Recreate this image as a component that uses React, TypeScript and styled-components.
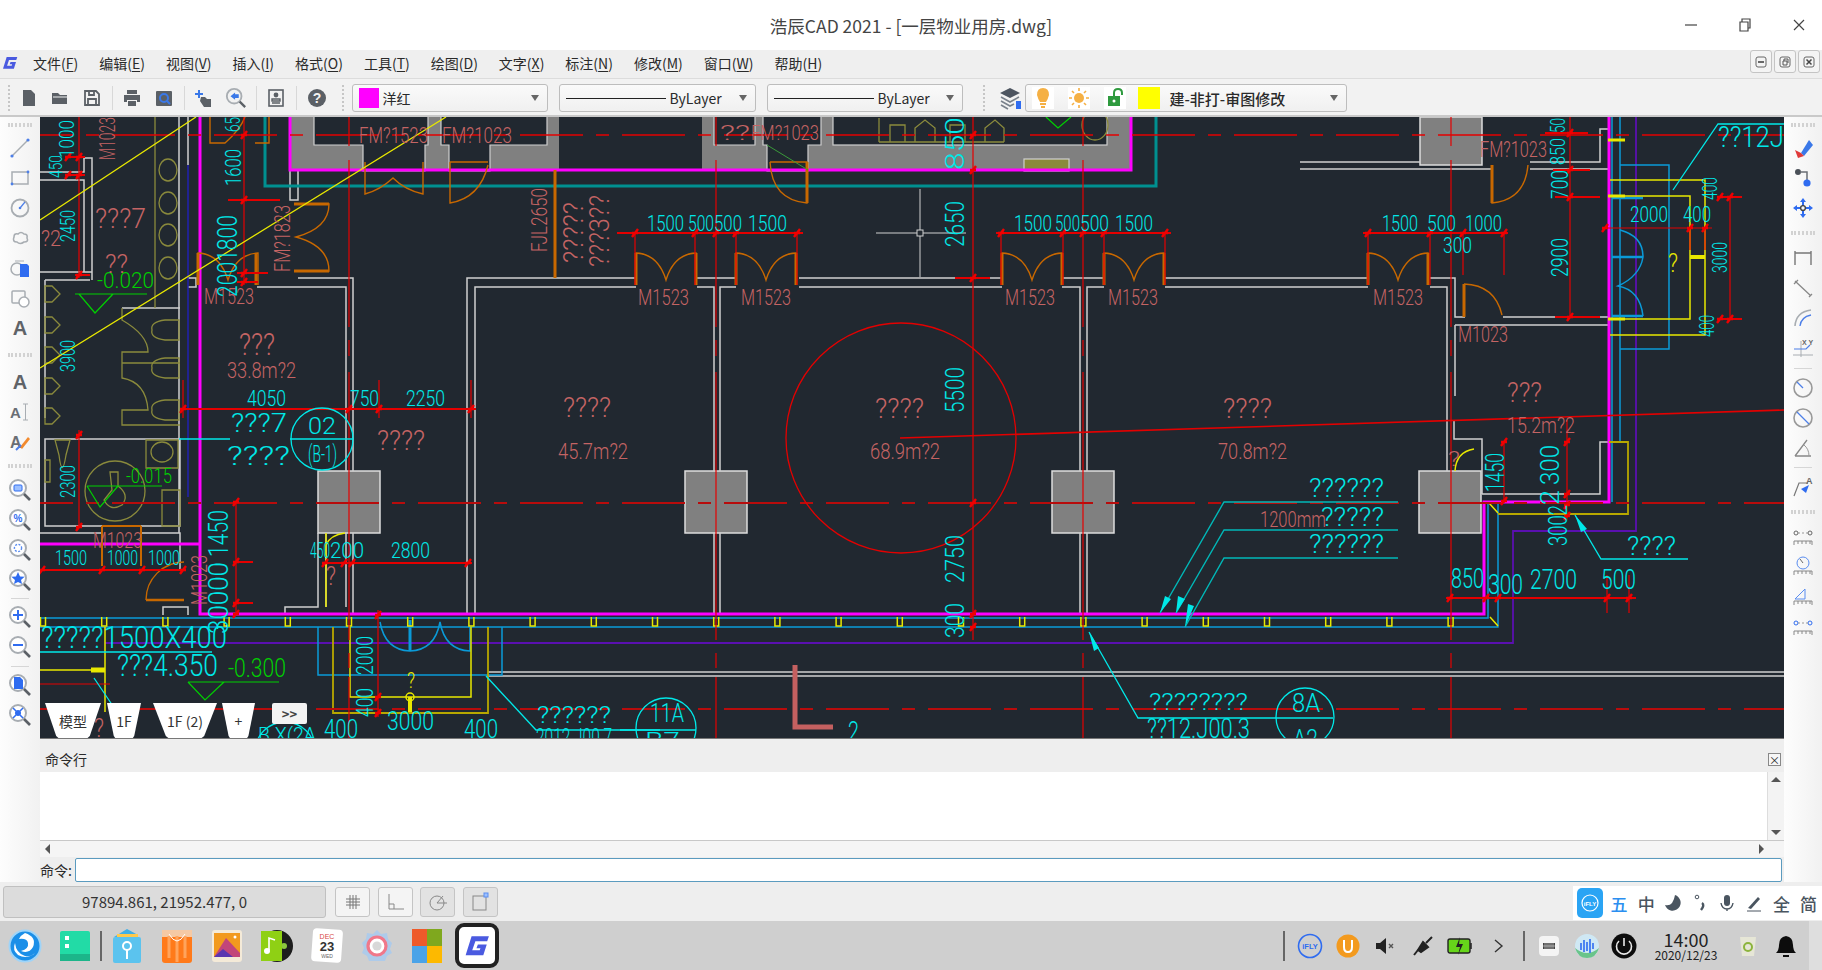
import React from "react";
import styled, { createGlobalStyle } from "styled-components";

const RED = "#e40000";
const DRED = "#b80c0c";
const CY = "#00e8e8";
const SAL = "#c46464";
const GRN = "#00d000";
const YEL = "#e8e800";
const OLV = "#8a8a3c";
const ORG = "#c86800";
const BLU = "#0a9ad8";
const MAG = "#ff00ff";
const TEAL = "#009090";
const WALL = "#cfcfcf";
const PUR = "#5a10b0";
const BG = "#212830";

const GlobalStyle = createGlobalStyle`
  html, body { margin: 0; padding: 0; overflow: hidden; background: #eee; }
  body { font-family: "Noto Sans CJK SC", "Noto Sans", sans-serif; }
`;

const Window = styled.div`
  width: 1822px;
  height: 970px;
  display: flex;
  flex-direction: column;
  color: #333;
`;

const TitleBar = styled.div`
  height: 50px;
  background: #fff;
  display: grid;
  grid-template-columns: 1fr auto 1fr;
  align-items: center;
  .name { font-size: 17.5px; color: #444; grid-column: 2; }
`;
const WinButtons = styled.div`
  grid-column: 3;
  justify-self: end;
  display: flex;
`;
const WinButton = styled.div`
  width: 54px;
  height: 50px;
  box-sizing: border-box;
  padding-left: 7px;
  display: flex;
  align-items: center;
  justify-content: center;
`;

const MenuBar = styled.div`
  height: 28px;
  box-sizing: border-box;
  background: #efefef;
  display: flex;
  align-items: center;
  position: relative;
  padding: 0 0 2px 2px;
`;
const MenuLogo = styled.div`
  width: 31px;
  height: 24px;
  display: flex;
  align-items: center;
`;
const MenuItem = styled.div`
  font-size: 14px;
  color: #2a2a2a;
  margin-right: 21px;
  white-space: nowrap;
  u { text-underline-offset: 2px; }
`;
const MdiButtons = styled.div`
  margin-left: auto;
  display: flex;
  gap: 2px;
  padding-right: 2px;
  align-self: flex-start;
`;
const MdiButton = styled.div`
  width: 22px;
  height: 23px;
  box-sizing: border-box;
  border: 1px solid #c4c4c4;
  border-radius: 3px;
  background: #f4f4f4;
  display: flex;
  align-items: center;
  justify-content: center;
`;

const ToolBar = styled.div`
  height: 39px;
  box-sizing: border-box;
  background: #f2f2f2;
  border-top: 1px solid #dcdcdc;
  border-bottom: 2px solid #c9c9c9;
  display: flex;
  align-items: center;
  padding: 2px 0 0 6px;
`;
const Grip = styled.div`
  width: 3px;
  height: 26px;
  border-left: 2px dotted #c6c6c6;
  margin: ${(p: { $m: string }) => p.$m};
`;
const ToolButton = styled.div`
  width: 31.5px;
  height: 30px;
  display: flex;
  align-items: center;
  justify-content: center;
`;
const ToolSep = styled.div`
  width: 1px;
  height: 24px;
  background: #d8d8d8;
  margin: 0 4px;
`;
const Combo = styled.div<{ $w: number; $ml: number }>`
  width: ${(p) => p.$w}px;
  margin-left: ${(p) => p.$ml}px;
  height: 28px;
  box-sizing: border-box;
  border: 1px solid #bdbdbd;
  border-radius: 3px;
  background: linear-gradient(#fafafa, #f0f0f0);
  display: flex;
  align-items: center;
  padding: 0 8px 0 6px;
  font-size: 14px;
  color: #2a2a2a;
  position: relative;
`;
const Swatch = styled.div<{ $c: string; $s: number; $mr: number }>`
  width: ${(p) => p.$s}px;
  height: ${(p) => p.$s}px;
  background: ${(p) => p.$c};
  margin-right: ${(p) => p.$mr}px;
  flex: none;
`;
const LayerName = styled.span`
  font-size: 15px;
  font-weight: 500;
`;
const ComboArrow = styled.div`
  margin-left: auto;
  width: 0;
  height: 0;
  border-left: 4px solid transparent;
  border-right: 4px solid transparent;
  border-top: 6px solid #666;
`;
const LineSample = styled.div`
  width: 100px;
  height: 0;
  border-top: 1px solid #222;
  margin-right: 4px;
`;
const LayerIcon = styled.div`
  width: 22px;
  height: 22px;
  flex: none;
  display: flex;
  margin-right: ${(p: { $mr: number }) => p.$mr}px;
  background: #fff;
`;

const Main = styled.div`
  flex: 1;
  display: flex;
  min-height: 0;
`;
const SideBar = styled.div<{ $w: number }>`
  width: ${(p) => p.$w}px;
  flex: none;
  background: linear-gradient(90deg, #fdfdfd, #f1f1f1);
  display: flex;
  flex-direction: column;
  align-items: center;
`;
const SideGrip = styled.div<{ $h: number }>`
  height: ${(p) => p.$h}px;
  width: 24px;
  display: flex;
  align-items: center;
  &::after {
    content: "";
    width: 100%;
    height: 4px;
    border-top: 2px dotted #d2d2d2;
    border-bottom: 2px dotted #d2d2d2;
    box-sizing: border-box;
  }
`;
const SideLine = styled.div<{ $h: number }>`
  height: ${(p) => p.$h}px;
  width: 18px;
  display: flex;
  align-items: center;
  &::after { content: ""; width: 100%; height: 1px; background: #d6d6d6; }
`;
const SideIcon = styled.div`
  height: 30px;
  width: 30px;
  display: flex;
  align-items: center;
  justify-content: center;
`;
const BigLetter = styled.span`
  font-family: "Liberation Sans", sans-serif;
  font-weight: 700;
  font-size: 20px;
  color: #5f6368;
`;
const Center = styled.div`
  flex: 1;
  min-width: 0;
  display: flex;
  flex-direction: column;
`;
const CanvasWrap = styled.div`
  height: 622px;
  background: ${BG};
  position: relative;
  overflow: hidden;
  border-bottom: 1px solid #777;
  box-sizing: border-box;
  svg.plan { display: block; }
  svg.plan text { font-family: Roboto, "Liberation Sans", sans-serif; font-weight: 300; }
`;
const TabStrip = styled.div`
  position: absolute;
  left: 5px;
  bottom: 0;
  display: flex;
  align-items: flex-end;
`;
const Tab = styled.div<{ $w: number; $ml: number }>`
  width: ${(p) => p.$w}px;
  margin-left: ${(p) => p.$ml}px;
  height: 35px;
  background: #fff;
  clip-path: polygon(0 0, 100% 0, 80% 94%, 76% 100%, 24% 100%, 20% 94%);
  display: flex;
  align-items: center;
  justify-content: center;
  font-size: 14px;
  color: #333;
`;
const MoreTabs = styled.div`
  width: 35px;
  height: 21px;
  margin-left: 17px;
  margin-bottom: 14px;
  background: #f3f3f3;
  border-radius: 2px;
  font-size: 13px;
  font-weight: 700;
  color: #444;
  display: flex;
  align-items: center;
  justify-content: center;
`;

const CommandHead = styled.div`
  height: 33px;
  box-sizing: border-box;
  padding: 7px 3px 0 5px;
  background: #eeeeee;
  display: flex;
  align-items: center;
  justify-content: space-between;
  font-size: 14px;
  color: #2a2a2a;
  flex: none;
`;
const CloseBox = styled.div`
  width: 13px;
  height: 13px;
  border: 1px solid #888;
  background: #f6f6f6;
  font-size: 11px;
  line-height: 12px;
  text-align: center;
  box-sizing: border-box;
`;
const CommandHistory = styled.div`
  height: 68px;
  background: #fff;
  display: flex;
  justify-content: flex-end;
  flex: none;
`;
const VScroll = styled.div`
  width: 17px;
  background: #f3f3f3;
  border-left: 1px solid #ddd;
  display: flex;
  flex-direction: column;
  justify-content: space-between;
  align-items: center;
  padding: 5px 0;
  box-sizing: border-box;
`;
const HScroll = styled.div`
  height: 17px;
  box-sizing: border-box;
  border-top: 1px solid #c8c8c8;
  background: #f5f5f5;
  display: flex;
  align-items: center;
  flex: none;
  padding-left: 5px;
  padding-right: 20px;
  justify-content: space-between;
`;
const ArrowSide = styled.div<{ $dir: "l" | "r" }>`
  width: 0;
  height: 0;
  border-top: 5px solid transparent;
  border-bottom: 5px solid transparent;
  ${(p) => (p.$dir === "l" ? "border-right: 5px solid #555;" : "border-left: 5px solid #555;")}
`;
const ArrowVert = styled.div<{ $dir: "u" | "d" }>`
  width: 0;
  height: 0;
  border-left: 5px solid transparent;
  border-right: 5px solid transparent;
  ${(p) => (p.$dir === "u" ? "border-bottom: 5px solid #555;" : "border-top: 5px solid #555;")}
`;
const CommandRow = styled.div`
  height: 25px;
  display: flex;
  align-items: center;
  font-size: 14px;
  color: #2a2a2a;
  flex: none;
  input {
    flex: 1;
    height: 24px;
    box-sizing: border-box;
    margin-left: 3px;
    margin-right: 2px;
    border: 1px solid #5b9bbf;
    border-radius: 2px;
    background: #fff;
    outline: none;
  }
`;

const StatusRow = styled.div`
  height: 39px;
  background: #eeeeee;
  display: flex;
  align-items: center;
  padding-left: 3px;
  flex: none;
`;
const Coords = styled.div`
  width: 323px;
  height: 32px;
  box-sizing: border-box;
  background: #dcdcdc;
  border: 1px solid #c0c0c0;
  border-radius: 3px;
  display: flex;
  align-items: center;
  justify-content: center;
  font-size: 15px;
  color: #333;
  margin-right: 9px;
`;
const StatusButton = styled.div<{ $on?: boolean }>`
  width: 35px;
  height: 30px;
  margin-right: 7.5px;
  box-sizing: border-box;
  border: 1px solid #c4c4c4;
  border-radius: 3px;
  background: ${(p) => (p.$on ? "#e2e2e2" : "#f4f4f4")};
  display: flex;
  align-items: center;
  justify-content: center;
`;
const ImeBar = styled.div`
  margin-left: auto;
  height: 34px;
  width: 249px;
  box-sizing: border-box;
  align-self: flex-start;
  margin-top: 4px;
  background: #fff;
  display: flex;
  align-items: center;
  padding-left: 4px;
  font-size: 17px;
  font-weight: 500;
  color: #4a5560;
  span { width: 27.5px; text-align: center; display: flex; justify-content: center; }
  span.blue { color: #2b8ff0; }
`;
const ImeLogo = styled.div`
  width: 26px;
  height: 30px;
  border-radius: 5px;
  background: #2aa4f4;
  margin-right: 3px;
  display: flex;
  align-items: center;
  justify-content: center;
`;

const Dock = styled.div`
  height: 49px;
  background: #cfcfcf;
  display: flex;
  align-items: center;
  flex: none;
`;
const DockSlot = styled.div<{ $w?: number }>`
  width: ${(p) => p.$w ?? 50}px;
  height: 49px;
  display: flex;
  align-items: center;
  justify-content: center;
  flex: none;
`;
const DockSep = styled.div<{ $ml?: number; $mr?: number }>`
  width: 2px;
  height: 30px;
  background: #666;
  flex: none;
  margin-left: ${(p) => p.$ml ?? 0}px;
  margin-right: ${(p) => p.$mr ?? 0}px;
`;
const ActiveApp = styled.div`
  width: 44px;
  height: 45px;
  box-sizing: border-box;
  border: 4px solid #222;
  border-radius: 9px;
  background: #fff;
  display: flex;
  align-items: center;
  justify-content: center;
`;
const Tray = styled.div`
  margin-left: auto;
  display: flex;
  align-items: center;
`;
const Clock = styled.div`
  width: 86px;
  text-align: center;
  color: #222;
  line-height: 1.05;
  .time { font-size: 18px; }
  .date { font-size: 12px; }
`;
const DockEdge = styled.div`
  width: 13px;
  height: 49px;
  margin-left: 5px;
  background: #dedede;
`;

/* ---------- plan drawing helpers ---------- */

type Label = [string, number, number, number, number, string];
type VLabel = [string, number, number, number, number, string];

const Txt = ({ l }: { l: Label }) => (
  <text x={l[1]} y={l[3]} fontSize={l[4] / 0.71} fill={l[5]} textLength={l[2] - l[1]} lengthAdjust="spacingAndGlyphs">
    {l[0]}
  </text>
);
const VTxt = ({ l }: { l: VLabel }) => (
  <text
    transform={`rotate(-90 ${l[1]} ${l[3]})`}
    x={l[1]}
    y={l[3]}
    fontSize={l[4] / 0.71}
    fill={l[5]}
    textLength={l[3] - l[2]}
    lengthAdjust="spacingAndGlyphs"
  >
    {l[0]}
  </text>
);

const labels: Label[] = [
  ["1500", 647, 684, 231, 16, CY], ["500", 688, 714, 231, 16, CY], ["500", 714, 742, 231, 16, CY], ["1500", 748, 787, 231, 16, CY],
  ["1500", 1014, 1052, 231, 16, CY], ["500", 1055, 1080, 231, 16, CY], ["500", 1080, 1109, 231, 16, CY], ["1500", 1115, 1153, 231, 16, CY],
  ["1500", 1382, 1418, 231, 16, CY], ["500", 1427, 1456, 231, 16, CY], ["1000", 1465, 1502, 231, 16, CY], ["300", 1443, 1472, 253, 16, CY],
  ["2000", 1630, 1668, 222, 16, CY], ["400", 1683, 1711, 222, 16, CY],
  ["4050", 247, 286, 406, 16, CY], ["750", 350, 379, 406, 16, CY], ["2250", 406, 445, 406, 16, CY],
  ["1500", 55, 87, 565, 14, CY], ["1000", 107, 138, 565, 14, CY], ["1000", 148, 180, 565, 14, CY],
  ["450", 310, 330, 558, 16, CY], ["200", 330, 364, 558, 16, CY], ["2800", 391, 430, 558, 16, CY],
  ["3000", 387, 434, 730, 18, CY], ["400", 324, 358, 738, 18, CY], ["400", 464, 498, 738, 18, CY],
  ["?????1500X400", 41, 227, 648, 22, CY], ["???4.350", 117, 218, 676, 22, CY],
  ["???7", 231, 287, 432, 18, CY], ["????", 227, 290, 465, 18, CY],
  ["850", 1451, 1484, 588, 19, CY], ["300", 1488, 1523, 594, 19, CY], ["2700", 1530, 1577, 589, 19, CY], ["500", 1601, 1636, 589, 19, CY],
  ["??????", 1309, 1384, 497, 18, CY], ["?????", 1321, 1384, 526, 18, CY], ["??????", 1309, 1384, 553, 18, CY], ["????", 1627, 1676, 555, 18, CY],
  ["??12J", 1718, 1784, 147, 21, CY],
  ["????????", 1149, 1248, 710, 17, CY], ["??12.J00.3", 1147, 1250, 738, 20, CY], ["??????", 537, 611, 723, 17, CY], ["2012.J00.7", 536, 612, 745, 17, CY],
  ["11A", 650, 684, 722, 18, CY], ["B7", 645, 680, 748, 16, CY], ["8A", 1292, 1320, 712, 18, CY], ["A2", 1293, 1318, 748, 18, CY],
  ["02", 308, 336, 434, 17, CY], ["(B-1)", 308, 337, 462, 17, CY], ["B X(2A", 258, 316, 742, 14, CY], ["2", 848, 859, 741, 20, CY],
  ["-0.020", 97, 154, 288, 16, GRN], ["-0.015", 126, 172, 483, 15, GRN], ["-0.300", 228, 286, 677, 18, GRN],
  ["M1523", 638, 689, 305, 16, SAL], ["M1523", 741, 791, 305, 16, SAL], ["M1523", 1005, 1055, 305, 16, SAL], ["M1523", 1108, 1158, 305, 16, SAL],
  ["M1523", 1373, 1423, 305, 16, SAL], ["M1023", 1458, 1508, 342, 16, SAL], ["M1523", 204, 254, 304, 16, SAL],
  ["FM?1523", 359, 428, 143, 16, SAL], ["FM?1023", 442, 512, 143, 16, SAL], ["FM?1023", 1480, 1547, 157, 16, SAL], ["FM?1023", 751, 819, 140, 15, SAL],
  ["??", 720, 750, 140, 15, SAL], ["???", 239, 275, 355, 22, SAL], ["33.8m?2", 227, 296, 378, 16, SAL],
  ["???7", 95, 146, 228, 20, SAL], ["?2", 41, 61, 246, 16, SAL], ["??", 105, 128, 273, 18, SAL],
  ["????", 563, 611, 417, 20, SAL], ["????", 377, 425, 450, 20, SAL], ["45.7m?2", 558, 628, 459, 16, SAL],
  ["????", 875, 924, 418, 20, SAL], ["????", 1223, 1272, 418, 20, SAL], ["68.9m?2", 870, 940, 459, 16, SAL], ["70.8m?2", 1218, 1287, 459, 16, SAL],
  ["???", 1507, 1542, 402, 20, SAL], ["15.2m?2", 1507, 1575, 433, 16, SAL], ["1200mm", 1260, 1326, 527, 16, SAL],
  ["M1023", 93, 142, 548, 16, SAL], ["?", 94, 104, 737, 18, SAL], ["?", 326, 336, 585, 18, SAL], ["?", 1448, 1460, 466, 14, SAL],
  ["?", 407, 415, 688, 16, YEL], ["?", 1668, 1678, 272, 18, YEL],
];

const vlabels: VLabel[] = [
  ["850", 964, 117, 170, 18, CY], ["2650", 964, 201, 247, 18, CY], ["5500", 964, 367, 413, 18, CY], ["2750", 964, 535, 583, 18, CY], ["300", 964, 603, 638, 18, CY],
  ["1600", 241, 149, 186, 16, CY], ["2001800", 237, 215, 297, 20, CY], ["3900", 75, 340, 372, 15, CY], ["2450", 75, 210, 242, 15, CY],
  ["1000", 74, 120, 158, 15, CY], ["450", 62, 155, 178, 13, CY], ["2300", 75, 465, 498, 15, CY], ["1450", 228, 510, 557, 20, CY], ["30000", 228, 562, 634, 20, CY],
  ["65", 240, 117, 132, 15, CY], ["2000", 373, 636, 675, 17, CY], ["400", 373, 688, 717, 17, CY],
  ["50", 1565, 118, 133, 14, CY], ["850", 1565, 138, 165, 14, CY], ["700", 1568, 170, 199, 17, CY], ["2900", 1568, 238, 277, 17, CY],
  ["400", 1717, 177, 200, 14, CY], ["3000", 1727, 242, 273, 14, CY], ["400", 1714, 315, 337, 14, CY],
  ["1450", 1504, 453, 492, 18, CY], ["300", 1559, 445, 485, 18, CY], ["3002", 1567, 505, 546, 18, CY], ["2", 1559, 490, 505, 18, CY],
  ["M1023", 115, 117, 160, 16, SAL], ["FM?1823", 290, 205, 272, 16, SAL], ["FJL2650", 547, 188, 252, 16, SAL],
  ["?????", 583, 202, 263, 20, SAL], ["???3??", 609, 195, 267, 20, SAL], ["M1023", 207, 555, 605, 16, SAL],
];

const ticks: [number, number][] = [
  [635, 233], [695, 233], [716, 233], [736, 233], [797, 233], [1001, 233], [1063, 233], [1083, 233], [1104, 233], [1165, 233],
  [1368, 233], [1430, 233], [1463, 233], [1504, 233], [183, 409], [349, 409], [379, 409], [471, 409], [42, 570], [102, 570], [142, 570], [183, 570],
  [325, 563], [344, 563], [352, 563], [468, 563], [236, 502], [236, 562], [236, 603], [236, 614], [244, 135], [244, 200], [244, 273], [244, 282],
  [68, 157], [79, 157], [68, 175], [79, 175], [79, 275], [79, 435], [79, 527], [378, 615], [378, 697], [378, 713], [973, 135], [973, 170], [973, 278], [973, 503], [973, 614], [973, 627],
  [1570, 133], [1570, 170], [1570, 197], [1570, 317], [1504, 442], [1504, 501], [1567, 442], [1567, 494], [1567, 505], [1567, 516],
  [1450, 598], [1486, 598], [1498, 598], [1607, 598], [1629, 598], [1730, 197], [1730, 319], [1720, 197], [1720, 319], [1605, 228], [1690, 228], [1705, 228],
];

const studs = Array.from({ length: 24 }, (_, i) => 43 + i * 61.2);

const doubleDoor = (x: number) =>
  `M${x} 285 V253 Q${x + 22} 254 ${x + 30} 280 Q${x + 38} 254 ${x + 60} 253 V285`;

const axisSegs = [[117, 146], [160, 327], [340, 356], [372, 640], [653, 668], [677, 739]];

const Plan = () => (
  <svg className="plan" width="1744" height="622" viewBox="40 117 1744 622">
    {/* concrete */}
    <g fill="#808080">
      <rect x="290" y="117" width="269" height="53" />
      <rect x="702" y="117" width="429" height="53" />
      <rect x="1420" y="117" width="62" height="48" stroke="#ddd" strokeWidth="1.5" />
      {[318, 685, 1052, 1419].map((x) => (
        <rect key={x} x={x} y="471" width="62" height="62" stroke="#ddd" strokeWidth="1.5" />
      ))}
    </g>
    <g fill={BG} stroke={WALL} strokeWidth="1.2">
      <path d="M314 116 V145 H363 V171 H425 V145 H428 V116 Z" />
      <path d="M441 116 V145 H449 V171 H490 V145 H547 V116 Z" />
      <path d="M714 116 V145 H755 V116 Z" />
      <path d="M763 116 V145 H767 V171 H808 V145 H821 V116 Z" />
      <rect x="833" y="116" width="274" height="29" />
      <rect x="1024" y="159" width="45" height="12" fill={OLV} />
    </g>

    {/* walls */}
    <path
      fill="none"
      stroke={WALL}
      strokeWidth="1.5"
      d="M298 278 H353 V471 M353 533 V614 M257 287 H346 V471 M346 533 V607 M290 170 V200 H298 V170 M326 533 V607 M285 615 V607 H318 V533
      M467 614 V287 M467 287 V278 H636 M475 614 V287 H636 M697 278 H736 M697 287 H714 V471 M714 533 V614 M720 471 V287 H736 M720 533 V614
      M799 278 H1002 M799 287 H1002 M1062 278 H1104 M1062 287 H1080 V471 M1080 533 V614 M1087 471 V287 H1104 M1087 533 V614
      M1165 278 H1368 M1165 287 H1368 M1430 278 H1455 V317 H1465 M1430 287 H1447 V471 M1503 317 H1608 M1455 325 H1608 M1455 325 V396
      M1300 162 H1420 M1300 169 H1492 M1530 162 H1600 V129 H1608 M1530 169 H1608
      M1454 420 V439 H1482 V471 M1482 494 H1600 V442 H1609 M1482 494 V471
      M179 117 V533 M188 117 V165 M40 172 H84 V158 M84 158 H92 V272 H40 M40 180 H84 V272 M45 280 H90 M45 280 V418 M92 272 V280 M122 308 H180
      M45 439 H180 V526 H45 Z M40 533 H102 M141 533 H180 V570 M163 615 V607 H188 V615 M188 278 H196 V287 H188"
    />
    <g fill="none" stroke={WALL} strokeWidth="1.5">
      <path d="M488 672 H1784 M488 676 H1784" />
    </g>

    {/* olive sanitary details */}
    <g fill="none" stroke={OLV} strokeWidth="1.3">
      <path d="M155 117 V308 M122 308 V320 Q148 335 148 352 H122 V363 H180 M122 363 V378 Q146 382 148 410 H122 V425 H180" />
      {[170, 203, 235, 268].map((y) => (
        <ellipse key={y} cx="168" cy={y} rx="9" ry="11" />
      ))}
      {[294, 325, 355, 386, 416].map((y) => (
        <path key={y} d={`M45 ${y - 8} H52 L60 ${y} L52 ${y + 8} H45 Z`} />
      ))}
      {[330, 368, 410].map((y) => (
        <path key={y} d={`M179 ${y - 10} H165 Q150 ${y - 8} 152 ${y} Q150 ${y + 8} 165 ${y + 10} H179 Z`} />
      ))}
      <circle cx="115" cy="491" r="30" />
      <path d="M55 440 H70 L66 455 Q62 480 59 455 Z M146 440 H178 V468 H146 Z M162 490 H180 V526 H162 Z M45 460 H50 V482 H45 Z" />
      <ellipse cx="162" cy="452" rx="11" ry="10" />
      <path d="M110 472 H118 V486 Q130 495 122 505 Q110 512 104 500 L112 490 Z" />
      <path d="M879 142 V118 M890 142 V125 H905 V142 M915 142 V128 L925 120 L935 128 V142 M950 142 V125 H965 V142 M985 142 V128 L995 120 L1004 128 V142 M879 142 H1004" />
      <ellipse cx="1095" cy="125" rx="13" ry="15" />
    </g>

    {/* structure */}
    <g fill="none">
      <path d="M290 117 V170 H1131 V117" stroke={MAG} strokeWidth="3" />
      <path d="M265 117 V186 H1156 V117" stroke={TEAL} strokeWidth="3" />
      <path d="M200 117 V614 H1484 V502 H1609 V117" stroke={MAG} strokeWidth="3" />
      <path d="M40 544 H200" stroke={MAG} strokeWidth="3" />
      <path d="M105 643 H1513 V531 H1636 V117" stroke={PUR} strokeWidth="1.8" />
      <path d="M188 165 V497" stroke="#2020b0" strokeWidth="1.5" />
    </g>
    <g fill="none" stroke={BLU} strokeWidth="1.5">
      <path d="M40 618 H1488 V502 M40 627 H1498 V502 M1612 117 V502 M1620 117 V442 M1620 165 H1669 V349 H1620" />
      <path d="M318 627 V675 H502 V627" />
      <path d="M1612 198 H1643 M1612 257 H1643 M1612 316 H1643" strokeWidth="2.5" />
      <path d="M1620 230 Q1643 236 1643 257 Q1640 276 1618 286 Q1640 290 1643 316" />
      <path d="M380 622 Q385 650 410 651 Q435 650 440 622 Q445 650 470 651 V627" />
      <path d="M410 620 V651" strokeWidth="3" />
    </g>
    <g fill="none" stroke={YEL} strokeWidth="1.5">
      {studs.map((x) => (
        <path key={x} d={`M${x - 2.5} 617 V626 H${x + 2.5} V617`} />
      ))}
      <path d="M40 670 H105 M105 627 V712 M350 627 V697 H471 V627 M1610 180 H1705 V335 H1610 M1610 196 H1690 V319 H1610" />
      <path d="M91 670 H105" strokeWidth="5" />
      <path d="M410 697 V713" strokeWidth="4" />
      <circle cx="410" cy="697" r="4" />
      <path d="M326 533 V607 M326 545 Q330 535 345 533 M1455 471 Q1456 452 1474 449" />
      <path d="M1608 140 H1625 M1608 196 H1625 M1608 319 H1625" strokeWidth="3" />
      <path d="M1690 257 H1705" strokeWidth="4" />
      <path d="M1489 503 L1498 513 M1490 617 L1498 626" />
    </g>
    <path d="M333 627 V713 H488 V627 M1498 514 H1628 V442 H1609" fill="none" stroke="#b8a800" strokeWidth="1.8" />

    {/* doors */}
    <g fill="none" stroke={ORG} strokeWidth="1.4">
      {[636, 736, 1002, 1104, 1368].map((x) => (
        <g key={x}>
          <path d={doubleDoor(x)} />
          <path d={`M${x} 253 V285 M${x + 60} 253 V285`} strokeWidth="3" />
        </g>
      ))}
      <path d={doubleDoor(198)} />
      <path d="M198 253 V285 M256 253 V285" strokeWidth="3" />
      <path d="M294 204 H329 Q329 228 296 237 Q329 246 329 271 H294" />
      <path d="M294 204 H329 M294 271 H329" strokeWidth="3" />
      <path d="M365 162 V194 Q380 190 393 178 Q405 190 423 194 V162" />
      <path d="M450 162 V203 Q480 198 488 165 M450 162 H488" />
      <path d="M210 117 V143 H225 Q240 130 245 117 M269 117 V143 H255" />
      <path d="M1492 165 V203 Q1525 200 1528 165" />
      <path d="M1492 165 V203" strokeWidth="3" />
      <path d="M1464 284 V317 M1464 284 Q1495 285 1502 315" />
      <path d="M1464 284 V317" strokeWidth="3" />
      <path d="M770 162 Q772 200 807 203 V162 H770" />
      <path d="M807 162 V203" strokeWidth="3" />
      <path d="M102 526 V566 M141 526 V566 M102 526 H141" strokeWidth="2" />
      <path d="M146 600 A38 38 0 0 1 184 562 M146 600 H184" />
      <path d="M146 600 H184" strokeWidth="2.5" />
    </g>
    <path d="M555 170 V278" stroke={ORG} strokeWidth="3" />
    <path d="M767 145 L808 170" stroke="#3a9a3a" />

    {/* axes */}
    <g stroke={DRED} strokeWidth="2" strokeDasharray="63 13 13 13" strokeDashoffset="30">
      <path d="M40 503 H1784" />
      <path d="M40 709 H1784" />
    </g>
    <path d="M40 135 H1784" stroke={RED} strokeWidth="1.4" strokeDasharray="63 13 13 13" strokeDashoffset="30" />
    <g stroke={RED} strokeWidth="1.2">
      {[349, 716, 1083, 1451].map((x) =>
        axisSegs.map((s) => <path key={`${x}-${s[0]}`} d={`M${x} ${s[0]} V${s[1]}`} />)
      )}
      <path d="M973 117 V640 M79 117 V278 M79 430 V527 M244 117 V285 M236 503 V614 M378 610 V717" />
      <path d="M617 233 H803 M996 233 H1171 M1363 233 H1508 M182 409 H476 M41 570 H184 M322 563 H472 M1446 598 H1636" strokeWidth="1.8" />
      <path d="M635 233 V285 M695 233 V285 M736 233 V285 M797 233 V285 M1001 233 V285 M1063 233 V285 M1104 233 V285 M1165 233 V285 M1368 233 V285 M1430 233 V285" />
      <path d="M1463 233 V275 M1504 233 V275 M183 380 V418 M379 380 V418 M471 380 V418 M1607 575 V613 M1629 575 V613" />
      <path d="M1570 117 V317 M1504 442 V503 M1567 420 V520 M1730 197 V319 M1605 228 H1712 M1690 228 V250 M1705 228 V250" />
      <path d="M228 200 H280 M237 273 H268 M237 282 H258 M236 562 H253 M236 603 H253 M75 275 H90 M66 157 H85 M66 175 H85 M1545 133 H1588 M1553 170 H1590 M1555 197 H1600 M1555 317 H1600 M955 278 H990 M1720 197 H1742 M1720 319 H1742" strokeWidth="1.8" />
      <path d="M40 684 H110 M850 739 H40" />
    </g>
    <path d="M900 438 L1784 410" stroke={RED} strokeWidth="1.6" fill="none" />
    <circle cx="901" cy="438" r="115" fill="none" stroke={RED} strokeWidth="1.3" />
    <g stroke="#f00000" strokeWidth="2.4">
      {ticks.map(([x, y]) => (
        <path key={`${x}-${y}`} d={`M${x - 3} ${y + 4} L${x + 3} ${y - 4} M${x - 3} ${y} H${x + 3}`} />
      ))}
    </g>

    {/* crosshair */}
    <g stroke="#d0d0d0" strokeWidth="1" fill="none">
      <path d="M876 233 H966 M920 236 V277 M920 189 V230" />
      <rect x="917" y="230" width="6" height="6" fill={BG} />
    </g>

    {/* diagonal yellow references */}
    <path d="M40 220 L196 117 M40 368 L446 117" stroke={YEL} strokeWidth="1.3" fill="none" />

    {/* leaders */}
    <g fill="none" stroke={CY} strokeWidth="1.3">
      <path d="M1398 502 H1224 L1160 613 M1398 530 H1224 L1176 613 M1398 558 H1224 L1185 627" strokeWidth="1.4" stroke="#00b8b8" />
      <path d="M1575 515 L1601 559 H1688 M1089 632 L1138 718 H1333 M486 676 L536 730 H660 M1673 190 L1718 124 H1784 M94 678 L119 715 M40 652 H212" />
      <circle cx="1305" cy="717" r="29" />
      <circle cx="666" cy="728" r="30" />
      <circle cx="322" cy="439" r="31" />
      <circle cx="285" cy="752" r="30" />
      <path d="M620 730 H696 M290 439 H353 M179 439 H230" />
    </g>
    <g fill={CY} stroke="none">
      <path d="M1160 613 L1165 596 L1171 599 Z M1176 613 L1178 596 L1185 599 Z M1185 627 L1188 604 L1194 606 Z M1089 632 L1099 648 L1094 651 Z M1575 515 L1587 529 L1581 532 Z" />
    </g>

    {/* green level marks */}
    <g fill="none" stroke={GRN} strokeWidth="1.2">
      <path d="M75 294 H147 M79 294 L95 313 L113 294 M188 682 H279 M188 682 L205 700 L224 682 M87 486 H162 M87 486 L100 507 L118 486 M1046 117 L1058 128 L1071 117" />
    </g>

    {/* section mark */}
    <path d="M795 665 V727 H833" fill="none" stroke="#c46060" strokeWidth="5" />

    {labels.map((l, i) => (
      <Txt key={i} l={l} />
    ))}
    {vlabels.map((l, i) => (
      <VTxt key={i} l={l} />
    ))}
  </svg>
);

/* ---------- toolbar / side icons ---------- */

const DK = "#5b6066";
const GY = "#a8adb2";
const ICN = "#4d7fe8";

const Sv = ({ children, s = 20, v = 20 }: { children: React.ReactNode; s?: number; v?: number }) => (
  <svg width={s} height={s} viewBox={`0 0 ${v} ${v}`} fill="none">
    {children}
  </svg>
);
const Mag = ({ children, c = GY }: { children?: React.ReactNode; c?: string }) => (
  <Sv s={24} v={24}>
    <circle cx="10" cy="10" r="8" stroke={c} strokeWidth="2" fill="#fff" />
    <path d="M16 16 L22 22" stroke="#5b6066" strokeWidth="2.6" />
    {children}
  </Sv>
);

const tb: Record<string, React.ReactNode> = {
  file: <Sv><path d="M4 2 H12 L16 6 V18 H4 Z" fill={DK} /></Sv>,
  open: <Sv><path d="M2 5 H8 L10 7 H17 V16 H2 Z" fill={DK} /><path d="M3 9 H17" stroke="#f2f2f2" /></Sv>,
  save: <Sv><path d="M3 3 H14 L17 6 V17 H3 Z M7 3 V7 H12 V3 M6 11 H14 V17 H6 Z" stroke={DK} strokeWidth="1.8" /></Sv>,
  print: <Sv><path d="M5 2 H15 V6 H5 Z M2 7 H18 V14 H15 V12 H5 V14 H2 Z M6 13 H14 V18 H6 Z" fill={DK} /></Sv>,
  prev: <Sv><rect x="2" y="3" width="16" height="15" rx="1" fill={DK} /><circle cx="10" cy="10" r="4" stroke="#3a78e8" strokeWidth="2" /><path d="M13 13 L16 16" stroke="#3a78e8" strokeWidth="2" /></Sv>,
  pick: <Sv><path d="M5 2 V10 M1 6 H9" stroke="#3a78e8" strokeWidth="2" /><path d="M7 9 H11 L13 11 H17 V19 H10 L6 13 Z" fill={DK} /></Sv>,
  zoomp: <Sv s={22} v={24}><circle cx="10" cy="10" r="8" stroke={GY} strokeWidth="2" /><path d="M16 16 L22 22" stroke={DK} strokeWidth="2.5" /><path d="M6 10 L11 6 V14 Z M11 8 H15 V12 H11" fill="#3a78e8" /></Sv>,
  props: <Sv><rect x="3" y="2" width="14" height="16" stroke={DK} strokeWidth="1.6" /><circle cx="10" cy="7" r="2.4" fill={DK} /><path d="M6 11 H14 V13 H6 Z M6 15 H14" stroke={DK} strokeWidth="1.4" /></Sv>,
};

const Line = () => <Sv s={22} v={22}><path d="M3 19 L19 3" stroke={GY} strokeWidth="1.5" /><circle cx="3" cy="19" r="1.6" fill={ICN} /><circle cx="19" cy="3" r="1.6" fill={ICN} /></Sv>;
const Rect = () => <Sv s={22} v={22}><rect x="3" y="5" width="16" height="12" stroke={GY} strokeWidth="1.5" /><circle cx="3" cy="17" r="1.4" fill={ICN} /><circle cx="19" cy="5" r="1.4" fill={ICN} /></Sv>;
const Circ = () => <Sv s={22} v={22}><circle cx="11" cy="11" r="8.5" stroke={GY} strokeWidth="1.8" /><path d="M11 11 L16 5" stroke={ICN} strokeWidth="1.2" /><circle cx="11" cy="11" r="1.3" fill={ICN} /></Sv>;
const Cloud = () => <Sv s={22} v={22}><path d="M5 10 Q5 6 9 7 Q12 4 15 7 Q19 7 18 11 Q20 15 15 15 Q11 18 8 15 Q3 15 5 10 Z" stroke={GY} strokeWidth="1.6" /></Sv>;
const Hatch = () => <Sv s={22} v={22}><circle cx="8" cy="12" r="6" stroke={GY} strokeWidth="1.5" /><path d="M6 4 H15" stroke={GY} /><path d="M11 7 H18 L20 9 V20 H11 Z" fill="#2f6cf0" /></Sv>;
const Region = () => <Sv s={22} v={22}><rect x="3" y="4" width="13" height="12" rx="1" stroke={GY} strokeWidth="1.5" /><circle cx="15" cy="15" r="5" stroke={GY} strokeWidth="1.5" fill="#fff" /></Sv>;
const AI = () => <Sv s={22} v={22}><text x="1" y="17" fontFamily="Liberation Sans" fontWeight="700" fontSize="15" fill="#6a6e74">A</text><path d="M14 3 H19 M16.5 3 V19 M14 19 H19" stroke={GY} /></Sv>;
const AStar = () => <Sv s={22} v={22}><text x="1" y="17" fontFamily="Liberation Sans" fontWeight="700" fontSize="16" fill="#6a6e74">A</text><path d="M11 16 L19 6 L21 8 L13 18 Z" fill="#f28a2e" /><path d="M7 19 L12 14" stroke={ICN} strokeWidth="2" /></Sv>;

const Eraser = () => <Sv s={22} v={22}><path d="M9 16 L17 3 L21 8 L12 19 Z" fill="#3a78e8" /><path d="M3 13 L9 16 L12 19 L6 21 Z" fill="#e03a3a" /></Sv>;
const Pline = () => <Sv s={22} v={22}><circle cx="6" cy="5" r="3" fill="#4a5058" /><path d="M8 5 H15 V13" stroke="#6a6e74" strokeWidth="1.5" /><circle cx="15" cy="16" r="3.6" fill="#2f6cf0" /></Sv>;
const Move = () => <Sv s={22} v={22}><path d="M11 1 L14 5 H12 V9 H10 V5 H8 Z M11 21 L8 17 H10 V13 H12 V17 H14 Z M1 11 L5 8 V10 H9 V12 H5 V14 Z M21 11 L17 14 V12 H13 V10 H17 V8 Z" fill="#2f6cf0" /><circle cx="11" cy="11" r="2.4" stroke="#444" strokeWidth="1.4" /></Sv>;
const DimLin = () => <Sv s={22} v={22}><path d="M3 18 V4 M19 18 V4 M3 6 H19" stroke="#777" strokeWidth="1.4" /></Sv>;
const DimAl = () => <Sv s={22} v={22}><path d="M3 4 L19 19 M2 7 L6 3 M17 20 L20 17" stroke="#888" strokeWidth="1.3" /></Sv>;
const DimArc = () => <Sv s={22} v={22}><path d="M3 19 Q4 5 19 3" stroke={GY} strokeWidth="1.6" /><path d="M8 19 Q9 10 19 8" stroke={ICN} strokeWidth="1.3" /></Sv>;
const DimOrd = () => <Sv s={22} v={22}><path d="M1 18 H21 M9 4 V20" stroke={GY} /><path d="M2 12 H14 L18 8" stroke={ICN} strokeWidth="1.2" /><text x="10" y="8" fontSize="7" fontFamily="Liberation Sans" fontWeight="700" fill="#666">X Y</text></Sv>;
const DimRad = () => <Sv s={22} v={22}><circle cx="11" cy="11" r="9" stroke="#999" strokeWidth="1.6" /><path d="M11 11 L5 5" stroke={ICN} strokeWidth="1.3" /></Sv>;
const DimDia = () => <Sv s={22} v={22}><circle cx="11" cy="11" r="9" stroke="#999" strokeWidth="1.6" /><path d="M5 5 L17 17" stroke={ICN} strokeWidth="1.3" /></Sv>;
const DimAng = () => <Sv s={22} v={22}><path d="M3 19 L15 3 M3 19 H19" stroke="#888" strokeWidth="1.3" /><path d="M12 8 Q17 12 17 19" stroke="#999" /></Sv>;
const Leader = () => <Sv s={22} v={22}><path d="M2 20 L7 7 H16" stroke="#777" strokeWidth="1.2" /><path d="M9 13 L17 9 L14 17 Z" fill="#2f6cf0" /><text x="14" y="8" fontSize="9" fontWeight="700" fontFamily="Liberation Sans" fill="#666">A</text></Sv>;
const Ruler = ({ children }: { children?: React.ReactNode }) => <Sv s={22} v={22}>{children}<path d="M2 15 H20 V19 M2 15 V19 M6 15 V18 M10 15 V18 M14 15 V18 M18 15 V18" stroke="#888" /></Sv>;

const Icons = {
  deepin: (
    <svg width="36" height="38" viewBox="0 0 36 38"><circle cx="18" cy="19" r="15.5" fill="#1b8fe8" stroke="#9fd4f8" strokeWidth="2" /><path d="M18 6 Q30 10 26 20 Q22 27 14 24 Q22 22 21 16 Q20 11 12 12 Q14 8 18 6 Z M8 16 Q9 26 18 29 Q24 30 28 26 Q20 33 11 28 Q5 23 8 16 Z" fill="#fff" /></svg>
  ),
  green: (
    <svg width="32" height="32" viewBox="0 0 32 32"><rect x="1" y="1" width="30" height="30" rx="2" fill="#22dba6" /><rect x="1" y="24" width="30" height="7" fill="#1cb58a" /><rect x="6" y="6" width="4" height="4" fill="#fff" /><rect x="6" y="14" width="4" height="4" fill="#fff" /></svg>
  ),
  files: (
    <svg width="30" height="36" viewBox="0 0 30 36"><path d="M2 9 L15 1 L26 7 V9 Z" fill="#3fb0e8" /><path d="M5 6 H26 V9 H5 Z" fill="#ffc94d" /><rect x="1" y="9" width="28" height="26" rx="2" fill="#5bc3ee" /><circle cx="15" cy="18" r="4" stroke="#fff" strokeWidth="2" fill="none" /><path d="M15 22 V31" stroke="#fff" strokeWidth="2" /></svg>
  ),
  store: (
    <svg width="32" height="36" viewBox="0 0 32 36"><rect x="1" y="2" width="30" height="33" rx="3" fill="#ff7a1a" /><rect x="1" y="2" width="30" height="7" fill="#f5c9a4" /><path d="M8 8 V30 M16 8 V34 M24 8 V30" stroke="#ffa45c" strokeWidth="3" /><path d="M8 6 Q16 20 24 6" stroke="#fff" fill="none" /></svg>
  ),
  photos: (
    <svg width="32" height="34" viewBox="0 0 32 34"><rect x="1" y="1" width="30" height="32" rx="3" fill="#f4ead8" /><rect x="3" y="4" width="26" height="24" fill="#f29a1e" /><path d="M3 28 L15 9 L29 24 V28 Z" fill="#c2467a" /><path d="M3 28 L12 20 L22 28 Z" fill="#5a36b0" /><circle cx="24" cy="8" r="1.5" fill="#fff" /></svg>
  ),
  music: (
    <svg width="34" height="32" viewBox="0 0 34 32"><circle cx="17" cy="16" r="16" fill="#1d1d1d" /><circle cx="24" cy="16" r="3" fill="#8cc63f" /><rect x="1" y="1" width="21" height="30" fill="#8fd014" /><path d="M9 20 V8 L15 10" stroke="#fff" strokeWidth="1.6" fill="none" /><circle cx="7" cy="21" r="3" fill="#fff" /></svg>
  ),
  cal: (
    <svg width="32" height="36" viewBox="0 0 32 36"><rect x="1" y="1" width="30" height="33" rx="4" fill="#fff" transform="rotate(4 16 18)" /><text x="16" y="11" textAnchor="middle" fontSize="7" fill="#d84848" fontFamily="Liberation Sans">DEC</text><text x="16" y="23" textAnchor="middle" fontSize="13" fontWeight="700" fill="#333" fontFamily="Liberation Sans">23</text><text x="16" y="30" textAnchor="middle" fontSize="5" fill="#666" fontFamily="Liberation Sans">WED</text></svg>
  ),
  gear: (
    <svg width="32" height="36" viewBox="0 0 32 36"><path d="M16 2 L20 6 L26 5 L27 11 L31 15 L29 21 L31 25 L26 28 L24 33 H8 L6 28 L1 25 L3 20 L1 15 L5 11 L6 5 L12 6 Z" fill="#aecbea" /><circle cx="16" cy="18" r="9" fill="#fff" stroke="#f0788a" strokeWidth="3.2" /><circle cx="16" cy="18" r="4.6" fill="#d8d8d8" /></svg>
  ),
  ms: (
    <svg width="30" height="34" viewBox="0 0 30 34"><rect width="15" height="17" fill="#ee5a2a" /><rect x="15" width="15" height="17" fill="#7fa81e" /><rect y="17" width="15" height="17" fill="#4aa3e8" /><rect x="15" y="17" width="15" height="17" fill="#fdb900" /></svg>
  ),
  g: (
    <svg width="26" height="26" viewBox="0 0 24 24"><path d="M7 3 H23 L21.4 7.5 H10.5 L7.6 16 H14.5 L15.2 14 H11.5 L12.8 10.5 H21 L17.8 20.5 H1.5 Z" fill="#4a5ae0" /></svg>
  ),
};

const menus: [string, string][] = [
  ["文件", "F"], ["编辑", "E"], ["视图", "V"], ["插入", "I"], ["格式", "O"], ["工具", "T"],
  ["绘图", "D"], ["文字", "X"], ["标注", "N"], ["修改", "M"], ["窗口", "W"], ["帮助", "H"],
];

const SmallG = () => (
  <svg width="16" height="18" viewBox="0 0 24 24"><path d="M7 3 H23 L21.4 7.5 H10.5 L7.6 16 H14.5 L15.2 14 H11.5 L12.8 10.5 H21 L17.8 20.5 H1.5 Z" fill="#4a5ae0" /></svg>
);

const App = () => {
  return (
    <Window>
      <GlobalStyle />
      <TitleBar>
        <div className="name">浩辰CAD 2021 - [一层物业用房.dwg]</div>
        <WinButtons>
          <WinButton><Sv s={14} v={14}><path d="M1 7 H13" stroke="#444" strokeWidth="1.2" /></Sv></WinButton>
          <WinButton><Sv s={14} v={14}><path d="M2 4 H10 V13 H2 Z M4 4 V1 H12 V10 H10" stroke="#444" strokeWidth="1.2" /></Sv></WinButton>
          <WinButton><Sv s={14} v={14}><path d="M2 2 L12 12 M12 2 L2 12" stroke="#444" strokeWidth="1.2" /></Sv></WinButton>
        </WinButtons>
      </TitleBar>

      <MenuBar>
        <MenuLogo><SmallG /></MenuLogo>
        {menus.map(([n, k]) => (
          <MenuItem key={k}>{n}(<u>{k}</u>)</MenuItem>
        ))}
        <MdiButtons>
          <MdiButton><Sv s={14} v={14}><rect x="2" y="2" width="10" height="10" rx="2" stroke="#666" /><path d="M4 7 H10" stroke="#444" strokeWidth="1.6" /></Sv></MdiButton>
          <MdiButton><Sv s={14} v={14}><rect x="2" y="2" width="10" height="10" rx="2" stroke="#666" /><path d="M5 6 H9 V10 H5 Z M6 6 V4 H10 V8" stroke="#555" /></Sv></MdiButton>
          <MdiButton><Sv s={14} v={14}><rect x="2" y="2" width="10" height="10" rx="2" stroke="#666" /><path d="M4.5 4.5 L9.5 9.5 M9.5 4.5 L4.5 9.5" stroke="#444" strokeWidth="1.5" /></Sv></MdiButton>
        </MdiButtons>
      </MenuBar>

      <ToolBar>
        <Grip $m="0 0 0 2px" />
        <ToolButton>{tb.file}</ToolButton>
        <ToolButton>{tb.open}</ToolButton>
        <ToolButton>{tb.save}</ToolButton>
        <ToolSep />
        <ToolButton>{tb.print}</ToolButton>
        <ToolButton>{tb.prev}</ToolButton>
        <ToolSep />
        <ToolButton>{tb.pick}</ToolButton>
        <ToolButton>{tb.zoomp}</ToolButton>
        <ToolSep />
        <ToolButton>{tb.props}</ToolButton>
        <ToolSep />
        <ToolButton>
          <Sv><circle cx="10" cy="10" r="9" fill={DK} /><text x="10" y="15" textAnchor="middle" fontSize="14" fontWeight="700" fontFamily="Liberation Sans" fill="#f2f2f2">?</text></Sv>
        </ToolButton>
        <Grip $m="0 0 0 9px" />
        <Combo $w={196} $ml={5}>
          <Swatch $c="#ff00ff" $s={20} $mr={4} />
          洋红
          <ComboArrow />
        </Combo>
        <Combo $w={197} $ml={11}>
          <LineSample />
          ByLayer
          <ComboArrow />
        </Combo>
        <Combo $w={196} $ml={11}>
          <LineSample />
          ByLayer
          <ComboArrow />
        </Combo>
        <Grip $m="0 10px 0 20px" />
        <Sv s={24} v={24}>
          <path d="M12 2 L22 7 L12 12 L2 7 Z" fill="#4d5560" />
          <path d="M3 11 L12 16 L21 11 M3 15 L12 20 L16 18 M3 19 L10 23" stroke="#7a828c" strokeWidth="1.6" />
          <rect x="18" y="15" width="5" height="8" fill="#2f6cf0" />
        </Sv>
        <Combo $w={322} $ml={3}>
          <LayerIcon $mr={14}>
            <Sv s={22} v={22}><path d="M11 1 Q17 1 17 8 Q16 12 14 15 H8 Q6 12 5 8 Q5 1 11 1 Z" fill="#f5b044" /><path d="M8 17 H14 M9 20 H13" stroke="#f5b044" strokeWidth="2" /></Sv>
          </LayerIcon>
          <LayerIcon $mr={14}>
            <Sv s={22} v={22}><circle cx="11" cy="11" r="5" fill="#f5b044" /><path d="M11 1 V4 M11 18 V21 M1 11 H4 M18 11 H21 M4 4 L6 6 M16 16 L18 18 M18 4 L16 6 M6 16 L4 18" stroke="#f5b044" strokeWidth="1.6" /></Sv>
          </LayerIcon>
          <LayerIcon $mr={12}>
            <Sv s={22} v={22}><path d="M10 9 V6 Q10 2 14 2 Q18 2 18 6 V8" stroke="#2e9a3e" strokeWidth="2" /><rect x="4" y="9" width="12" height="10" fill="#2e9a3e" /><circle cx="10" cy="14" r="1.5" fill="#fff" /></Sv>
          </LayerIcon>
          <Swatch $c="#ffff00" $s={22} $mr={10} />
          <LayerName>建-非打-审图修改</LayerName>
          <ComboArrow />
        </Combo>
      </ToolBar>

      <Main>
        <SideBar $w={40}>
          <SideGrip $h={16} />
          <SideIcon><Line /></SideIcon>
          <SideIcon><Rect /></SideIcon>
          <SideIcon><Circ /></SideIcon>
          <SideIcon><Cloud /></SideIcon>
          <SideIcon><Hatch /></SideIcon>
          <SideIcon><Region /></SideIcon>
          <SideIcon><BigLetter>A</BigLetter></SideIcon>
          <SideGrip $h={24} />
          <SideIcon><BigLetter>A</BigLetter></SideIcon>
          <SideIcon><AI /></SideIcon>
          <SideIcon><AStar /></SideIcon>
          <SideGrip $h={18} />
          <SideIcon><Mag><rect x="6" y="7" width="8" height="6" rx="1" fill="#9cc0ff" stroke="#2f6cf0" /></Mag></SideIcon>
          <SideIcon><Mag><text x="10" y="14" textAnchor="middle" fontSize="10" fontWeight="700" fontFamily="Liberation Sans" fill="#2f6cf0">%</text></Mag></SideIcon>
          <SideIcon><Mag><circle cx="10" cy="10" r="3.6" stroke="#5a8df0" strokeDasharray="2 1.4" strokeWidth="1.4" /></Mag></SideIcon>
          <SideIcon><Mag><path d="M10 4 L12 8.4 L16.6 8.8 L13 12 L14 16 L10 14 L6 16 L7 12 L3.4 8.8 L8 8.4 Z" fill="#2f6cf0" /></Mag></SideIcon>
          <SideLine $h={7} />
          <SideIcon><Mag><path d="M10 5 V15 M5 10 H15" stroke="#2f6cf0" strokeWidth="2" /></Mag></SideIcon>
          <SideIcon><Mag><path d="M5 10 H15" stroke="#2f6cf0" strokeWidth="2" /></Mag></SideIcon>
          <SideLine $h={8} />
          <SideIcon><Mag><path d="M6 4 H12 L15 7 V16 H6 Z" fill="#2f6cf0" /></Mag></SideIcon>
          <SideIcon><Mag><circle cx="10" cy="10" r="3" fill="#2f6cf0" /><path d="M5 5 L8 8 M15 5 L12 8 M5 15 L8 12 M15 15 L12 12" stroke="#2f6cf0" strokeWidth="1.5" /></Mag></SideIcon>
        </SideBar>

        <Center>
          <CanvasWrap>
            <Plan />
            <TabStrip>
              <Tab $w={56} $ml={0}>模型</Tab>
              <Tab $w={34} $ml={6}>1F</Tab>
              <Tab $w={64} $ml={12}>1F (2)</Tab>
              <Tab $w={33} $ml={5}>+</Tab>
              <MoreTabs>&gt;&gt;</MoreTabs>
            </TabStrip>
          </CanvasWrap>
          <CommandHead>
            命令行
            <CloseBox>×</CloseBox>
          </CommandHead>
          <CommandHistory>
            <VScroll>
              <ArrowVert $dir="u" />
              <ArrowVert $dir="d" />
            </VScroll>
          </CommandHistory>
          <HScroll>
            <ArrowSide $dir="l" />
            <ArrowSide $dir="r" />
          </HScroll>
          <CommandRow>
            命令:
            <input />
          </CommandRow>
        </Center>

        <SideBar $w={38}>
          <SideGrip $h={16} />
          <SideIcon><Eraser /></SideIcon>
          <SideIcon><Pline /></SideIcon>
          <SideIcon><Move /></SideIcon>
          <SideGrip $h={20} />
          <SideIcon><DimLin /></SideIcon>
          <SideIcon><DimAl /></SideIcon>
          <SideIcon><DimArc /></SideIcon>
          <SideIcon><DimOrd /></SideIcon>
          <SideLine $h={10} />
          <SideIcon><DimRad /></SideIcon>
          <SideIcon><DimDia /></SideIcon>
          <SideIcon><DimAng /></SideIcon>
          <SideLine $h={9} />
          <SideIcon><Leader /></SideIcon>
          <SideGrip $h={20} />
          <SideIcon><Ruler><circle cx="4" cy="7" r="2" stroke="#666" /><circle cx="18" cy="7" r="2" stroke="#666" /><path d="M6 7 H16" stroke="#999" strokeDasharray="2 2" /></Ruler></SideIcon>
          <SideIcon><Ruler><circle cx="11" cy="7" r="6" stroke="#5a8df0" /><path d="M11 7 L8 3" stroke="#666" /></Ruler></SideIcon>
          <SideIcon><Ruler><path d="M3 13 L13 3 V13 Z" stroke="#5a8df0" /></Ruler></SideIcon>
          <SideIcon><Ruler><circle cx="4" cy="7" r="2" stroke="#2f6cf0" /><circle cx="18" cy="7" r="2" stroke="#2f6cf0" /><path d="M6 7 H16" stroke="#999" strokeDasharray="2 2" /></Ruler></SideIcon>
        </SideBar>
      </Main>

      <StatusRow>
        <Coords>97894.861, 21952.477, 0</Coords>
        <StatusButton>
          <Sv s={18} v={18}><path d="M6 2 V16 M9 2 V16 M12 2 V16 M2 6 H16 M2 9 H16 M2 12 H16" stroke="#777" /></Sv>
        </StatusButton>
        <StatusButton>
          <Sv s={20} v={20}><path d="M4 2 V17 H19 M4 12 H9 V17" stroke="#888" /></Sv>
        </StatusButton>
        <StatusButton $on>
          <Sv s={20} v={20}><circle cx="9" cy="11" r="7" stroke="#888" /><path d="M9 11 L15 4 M9 11 H19" stroke="#888" /></Sv>
        </StatusButton>
        <StatusButton $on>
          <Sv s={20} v={20}><rect x="3" y="4" width="13" height="14" stroke="#888" /><rect x="14" y="1" width="4" height="4" fill="#9cc0ff" stroke="#5a8df0" /></Sv>
        </StatusButton>
        <ImeBar>
          <ImeLogo>
            <Sv s={20} v={20}><circle cx="10" cy="10" r="8" stroke="#fff" strokeWidth="1.2" /><text x="10" y="12.5" textAnchor="middle" fontSize="6" fontWeight="700" fontFamily="Liberation Sans" fill="#fff">iFLY</text></Sv>
          </ImeLogo>
          <span className="blue">五</span>
          <span>中</span>
          <span><Sv s={18} v={18}><path d="M11 1 A8 8 0 1 1 1 11 Q9 13 11 1 Z" fill="#4a5560" /></Sv></span>
          <span><Sv s={18} v={18}><circle cx="6" cy="3" r="1.8" stroke="#4a5560" /><path d="M11 9 Q14 11 10 16" stroke="#4a5560" strokeWidth="2.4" /></Sv></span>
          <span><Sv s={18} v={18}><rect x="6" y="1" width="6" height="11" rx="3" fill="#4a5560" /><path d="M3 9 Q4 15 9 15 Q14 15 15 9 M9 15 V17" stroke="#4a5560" strokeWidth="1.4" /></Sv></span>
          <span><Sv s={18} v={18}><path d="M3 14 L13 3 L15 5 L6 15 Z" fill="#4a5560" /><path d="M2 17 H16" stroke="#4a5560" /></Sv></span>
          <span>全</span>
          <span>简</span>
        </ImeBar>
      </StatusRow>

      <Dock>
        <DockSlot>{Icons.deepin}</DockSlot>
        <DockSlot>{Icons.green}</DockSlot>
        <DockSep />
        <DockSlot>{Icons.files}</DockSlot>
        <DockSlot>{Icons.store}</DockSlot>
        <DockSlot>{Icons.photos}</DockSlot>
        <DockSlot>{Icons.music}</DockSlot>
        <DockSlot>{Icons.cal}</DockSlot>
        <DockSlot>{Icons.gear}</DockSlot>
        <DockSlot>{Icons.ms}</DockSlot>
        <DockSlot><ActiveApp>{Icons.g}</ActiveApp></DockSlot>
        <Tray>
          <DockSep $mr={7} />
          <DockSlot $w={37.5}>
            <Sv s={26} v={26}><circle cx="13" cy="13" r="11.5" stroke="#2f6cf0" strokeWidth="1.6" /><text x="13" y="16" textAnchor="middle" fontSize="7.5" fontWeight="700" fontFamily="Liberation Sans" fill="#2f6cf0">iFLY</text></Sv>
          </DockSlot>
          <DockSlot $w={37.5}>
            <Sv s={24} v={24}><circle cx="12" cy="12" r="11.5" fill="#f39a1e" /><path d="M8 6 V13 Q8 18 12 18 Q16 18 16 13 V6" stroke="#fff" strokeWidth="2" /></Sv>
          </DockSlot>
          <DockSlot $w={37.5}>
            <Sv s={22} v={22}><path d="M2 8 H6 L12 3 V19 L6 14 H2 Z" fill="#222" /><path d="M15 9 L19 13 M19 9 L15 13" stroke="#555" strokeWidth="1.4" /></Sv>
          </DockSlot>
          <DockSlot $w={37.5}>
            <Sv s={22} v={22}><path d="M20 2 L14 8 M11 7 L16 12 L9 17 L6 15 Z" stroke="#222" strokeWidth="2" fill="#222" /><path d="M6 15 L2 20" stroke="#222" strokeWidth="2" /></Sv>
          </DockSlot>
          <DockSlot $w={37.5}>
            <Sv s={26} v={26}><rect x="1" y="6" width="22" height="14" rx="2" stroke="#222" strokeWidth="1.4" fill="#66d61a" /><path d="M24 10 V16" stroke="#222" strokeWidth="1.5" /><path d="M13 4 L9 14 H13 L11 22 L16 11 H12 Z" fill="#222" /></Sv>
          </DockSlot>
          <DockSlot $w={37.5}>
            <Sv s={18} v={18}><path d="M6 3 L13 9 L6 15" stroke="#333" strokeWidth="1.4" /></Sv>
          </DockSlot>
          <DockSep $ml={6} $mr={6} />
          <DockSlot $w={37.5}>
            <Sv s={24} v={24}><rect x="2" y="2" width="20" height="20" rx="4" fill="#f4f4f4" /><path d="M6 9 H18 V15 H6 Z" fill="#444" /><path d="M8 9 V15 M10 9 V15 M12 9 V15 M14 9 V15 M16 9 V15 M6 12 H18" stroke="#f4f4f4" strokeWidth="0.5" /></Sv>
          </DockSlot>
          <DockSlot $w={37.5}>
            <Sv s={26} v={26}><circle cx="13" cy="13" r="12" fill="#cfe8f4" /><path d="M1 15 Q13 25 25 15 Q22 25 13 25 Q4 25 1 15 Z" fill="#6ac48a" /><path d="M7 10 V17 M10 7 V19 M13 9 V18 M16 6 V20 M19 10 V16" stroke="#2f6cf0" strokeWidth="1.6" /></Sv>
          </DockSlot>
          <DockSlot $w={37.5}>
            <Sv s={26} v={26}><circle cx="13" cy="13" r="12.5" fill="#0c0c0c" /><path d="M8 8 A7.5 7.5 0 1 0 18 8 M13 5 V13" stroke="#e8e8e8" strokeWidth="1.6" /></Sv>
          </DockSlot>
          <Clock>
            <div className="time">14:00</div>
            <div className="date">2020/12/23</div>
          </Clock>
          <DockSlot $w={38}>
            <Sv s={24} v={24}><path d="M4 3 H20 L18 22 H6 Z" fill="#e6e6d6" /><circle cx="12" cy="13" r="4" stroke="#8cb43c" strokeWidth="2" /></Sv>
          </DockSlot>
          <DockSlot $w={37}>
            <Sv s={24} v={24}><path d="M12 2 Q19 3 19 11 Q19 16 22 19 H2 Q5 16 5 11 Q5 3 12 2 Z" fill="#0c0c0c" /><path d="M9 21 H15 V23 H9 Z" fill="#0c0c0c" /></Sv>
          </DockSlot>
          <DockEdge />
        </Tray>
      </Dock>
    </Window>
  );
};

export default App;
